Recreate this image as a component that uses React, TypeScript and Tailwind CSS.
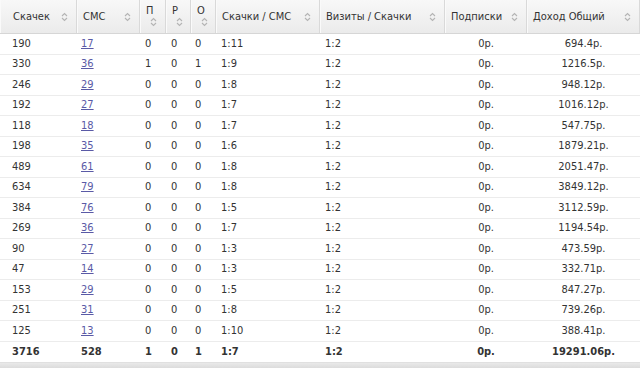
const rows: [number, number, number, number, number, string, string, string][] = [
  [190, 17, 0, 0, 0, "1:11", "0р.", "694.4р."],
  [330, 36, 1, 0, 1, "1:9", "0р.", "1216.5р."],
  [246, 29, 0, 0, 0, "1:8", "0р.", "948.12р."],
  [192, 27, 0, 0, 0, "1:7", "0р.", "1016.12р."],
  [118, 18, 0, 0, 0, "1:7", "0р.", "547.75р."],
  [198, 35, 0, 0, 0, "1:6", "0р.", "1879.21р."],
  [489, 61, 0, 0, 0, "1:8", "0р.", "2051.47р."],
  [634, 79, 0, 0, 0, "1:8", "0р.", "3849.12р."],
  [384, 76, 0, 0, 0, "1:5", "0р.", "3112.59р."],
  [269, 36, 0, 0, 0, "1:7", "0р.", "1194.54р."],
  [90, 27, 0, 0, 0, "1:3", "0р.", "473.59р."],
  [47, 14, 0, 0, 0, "1:3", "0р.", "332.71р."],
  [153, 29, 0, 0, 0, "1:5", "0р.", "847.27р."],
  [251, 31, 0, 0, 0, "1:8", "0р.", "739.26р."],
  [125, 13, 0, 0, 0, "1:10", "0р.", "388.41р."],
]

const cols = "grid grid-cols-[77px_63px_26px_25px_25px_104px_125px_82px_113px]"

const SortIcon = () => (
  <svg width="7" height="10" viewBox="0 0 7 10" fill="none" stroke="#b4b4b4" strokeWidth="1.1">
    <path d="M1 4 L3.5 1.5 L6 4" />
    <path d="M1 6 L3.5 8.5 L6 6" />
  </svg>
)

const Head = ({ label, first, stacked }: { label: string; first?: boolean; stacked?: boolean }) => (
  <div
    className={
      "relative h-full border-r border-[#d9d9d9] shadow-[inset_1px_0_0_#fafafa] " +
      (first ? "pl-[13px] " : "pl-[6px] ") +
      (stacked ? "pt-[3px]" : "flex items-center")
    }
  >
    <span className="leading-[14px]">{label}</span>
    <span className={stacked ? "absolute left-[10px] top-[17px]" : "absolute right-[8px] top-[12px]"}>
      <SortIcon />
    </span>
  </div>
)

export default function App() {
  return (
    <div className="w-[640px] h-[368px] overflow-hidden bg-white text-[11px] text-[#333] font-['DejaVu_Sans_Condensed','DejaVu_Sans',sans-serif]">
      <div className={cols + " h-[34px] border-b border-[#d6d6d6] bg-gradient-to-b from-[#f8f8f8] to-[#ebebeb]"}>
        <Head label="Скачек" first />
        <Head label="СМС" />
        <Head label="П" stacked />
        <Head label="Р" stacked />
        <Head label="О" stacked />
        <Head label="Скачки / СМС" />
        <Head label="Визиты / Скачки" />
        <Head label="Подписки" />
        <Head label="Доход Общий" />
      </div>
      {rows.map((r, i) => (
        <div key={i} className={cols + " h-[20.5px] items-center border-b border-[#ececec]"}>
          <div className="pl-[12px]">{r[0]}</div>
          <div className="pl-[4px]">
            <a href="#" className="text-[#5a5aa6] underline">{r[1]}</a>
          </div>
          <div className="pl-[5px]">{r[2]}</div>
          <div className="pl-[5px]">{r[3]}</div>
          <div className="pl-[4px]">{r[4]}</div>
          <div className="pl-[5px]">{r[5]}</div>
          <div className="pl-[5px]">1:2</div>
          <div className="text-center">{r[6]}</div>
          <div className="text-center">{r[7]}</div>
        </div>
      ))}
      <div className={cols + " h-[20.5px] items-center font-bold"}>
        <div className="pl-[12px]">3716</div>
        <div className="pl-[4px]">528</div>
        <div className="pl-[5px]">1</div>
        <div className="pl-[5px]">0</div>
        <div className="pl-[4px]">1</div>
        <div className="pl-[5px]">1:7</div>
        <div className="pl-[5px]">1:2</div>
        <div className="text-center">0р.</div>
        <div className="text-center">19291.06р.</div>
      </div>
      <div className="h-[6px] bg-gradient-to-b from-[#e9e9e9] to-[#dcdcdc] border-t border-[#e0e0e0]" />
    </div>
  )
}
